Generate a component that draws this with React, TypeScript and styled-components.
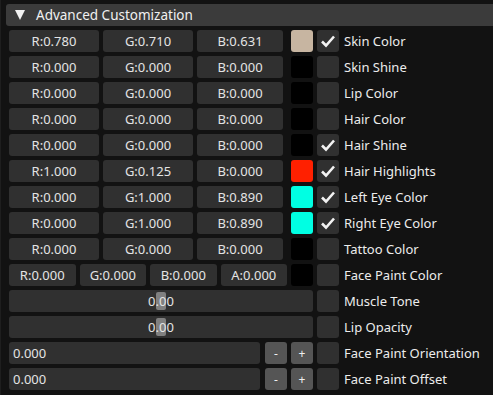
import styled, { createGlobalStyle } from "styled-components";

const GlobalStyle = createGlobalStyle`
  html, body {
    margin: 0;
    padding: 0;
    background: #121212;
    font-family: "Noto Sans", "DejaVu Sans", sans-serif;
    font-size: 13px;
    color: #e6e6e6;
  }
`;

const Panel = styled.div`
  width: 493px;
  height: 395px;
  overflow: hidden;
  display: flex;
  flex-direction: column;
  padding: 4px 0 0 5px;
  box-sizing: border-box;
  border-left: 1px solid #1e1e1e;
`;

const Header = styled.div`
  height: 22px;
  display: flex;
  align-items: center;
  gap: 11px;
  padding-left: 9px;
  background: #3b3b3b;
  border-radius: 3px 0 0 3px;
  font-size: 13.5px;
  color: #f0f0f0;
`;

const Arrow = styled.span`
  width: 0;
  height: 0;
  border-left: 5.5px solid transparent;
  border-right: 5.5px solid transparent;
  border-top: 10px solid #f2f2f2;
`;

const List = styled.div`
  display: flex;
  flex-direction: column;
  gap: 4px;
  padding: 4px 0 0 3px;
`;

const Row = styled.div`
  display: flex;
  align-items: center;
  height: 22px;
`;

const Controls = styled.div<{ $gap?: number }>`
  width: 304px;
  height: 22px;
  display: flex;
  gap: ${(p) => p.$gap ?? 4}px;
  flex-shrink: 0;
`;

const Fields = styled.div`
  flex: 1;
  display: flex;
  gap: 4px;
`;

const Field = styled.div<{ $w?: number; $left?: boolean }>`
  ${(p) => (p.$w ? `width: ${p.$w}px;` : "flex: 1;")}
  flex-shrink: 0;
  height: 22px;
  box-sizing: border-box;
  background: #303030;
  border-radius: 3px;
  display: flex;
  align-items: center;
  justify-content: ${(p) => (p.$left ? "flex-start" : "center")};
  padding-left: ${(p) => (p.$left ? "4px" : "0")};
  color: #e4e4e4;
  white-space: nowrap;
`;

const Swatch = styled.div<{ $color: string }>`
  width: 22px;
  height: 22px;
  flex-shrink: 0;
  border-radius: 3px;
  background: ${(p) => p.$color};
`;

const Slider = styled.div`
  position: relative;
  flex: 1;
  height: 22px;
  background: #303030;
  border-radius: 3px;
  display: flex;
  align-items: center;
  justify-content: center;
  color: #e4e4e4;
`;

const Grab = styled.div`
  position: absolute;
  left: 147px;
  top: 2px;
  width: 10px;
  height: 18px;
  border-radius: 2px;
  background: #808080;
`;

const SliderText = styled.span`
  position: relative;
`;

const StepButton = styled.div`
  width: 22px;
  height: 22px;
  flex-shrink: 0;
  border-radius: 3px;
  background: #555555;
  display: flex;
  align-items: center;
  justify-content: center;
  color: #f0f0f0;
  font-size: 12px;
`;

const Check = styled.div`
  width: 22px;
  height: 22px;
  margin-left: 4px;
  flex-shrink: 0;
  border-radius: 3px;
  background: #303030;
  display: flex;
  align-items: center;
  justify-content: center;
`;

const Label = styled.span`
  margin-left: 5px;
  white-space: nowrap;
  color: #ececec;
`;

const CheckMark = () => (
  <svg width="16" height="14" viewBox="0 0 16 14">
    <polyline
      points="2,7.5 6,11.5 14,2.5"
      fill="none"
      stroke="#f2f2f2"
      strokeWidth="2.6"
    />
  </svg>
);

type Rgb = [number, number, number];

const toCss = (c: Rgb) =>
  `rgb(${c.map((v) => Math.round(v * 255)).join(",")})`;

const colorRows: { label: string; c: Rgb; on: boolean }[] = [
  { label: "Skin Color", c: [0.78, 0.71, 0.631], on: true },
  { label: "Skin Shine", c: [0, 0, 0], on: false },
  { label: "Lip Color", c: [0, 0, 0], on: false },
  { label: "Hair Color", c: [0, 0, 0], on: false },
  { label: "Hair Shine", c: [0, 0, 0], on: true },
  { label: "Hair Highlights", c: [1, 0.125, 0], on: true },
  { label: "Left Eye Color", c: [0, 1, 0.89], on: true },
  { label: "Right Eye Color", c: [0, 1, 0.89], on: true },
  { label: "Tattoo Color", c: [0, 0, 0], on: false },
];

const fmt = (v: number) => v.toFixed(3);

export default function App() {
  return (
    <>
      <GlobalStyle />
      <Panel>
        <Header>
          <Arrow />
          Advanced Customization
        </Header>
        <List>
          {colorRows.map((r) => (
            <Row key={r.label}>
              <Controls $gap={8}>
                <Fields>
                  <Field $w={90}>R:{fmt(r.c[0])}</Field>
                  <Field $w={90}>G:{fmt(r.c[1])}</Field>
                  <Field>B:{fmt(r.c[2])}</Field>
                </Fields>
                <Swatch $color={toCss(r.c)} />
              </Controls>
              <Check>{r.on && <CheckMark />}</Check>
              <Label>{r.label}</Label>
            </Row>
          ))}

          <Row>
            <Controls>
              <Fields>
                <Field>R:0.000</Field>
                <Field>G:0.000</Field>
                <Field>B:0.000</Field>
                <Field>A:0.000</Field>
              </Fields>
              <Swatch $color="#000" />
            </Controls>
            <Check />
            <Label>Face Paint Color</Label>
          </Row>

          {["Muscle Tone", "Lip Opacity"].map((label) => (
            <Row key={label}>
              <Controls>
                <Slider>
                  <Grab />
                  <SliderText>0.00</SliderText>
                </Slider>
              </Controls>
              <Check />
              <Label>{label}</Label>
            </Row>
          ))}

          {["Face Paint Orientation", "Face Paint Offset"].map((label) => (
            <Row key={label}>
              <Controls>
                <Field $left>0.000</Field>
                <StepButton style={{ marginLeft: 1 }}>-</StepButton>
                <StepButton>+</StepButton>
              </Controls>
              <Check />
              <Label>{label}</Label>
            </Row>
          ))}
        </List>
      </Panel>
    </>
  );
}
